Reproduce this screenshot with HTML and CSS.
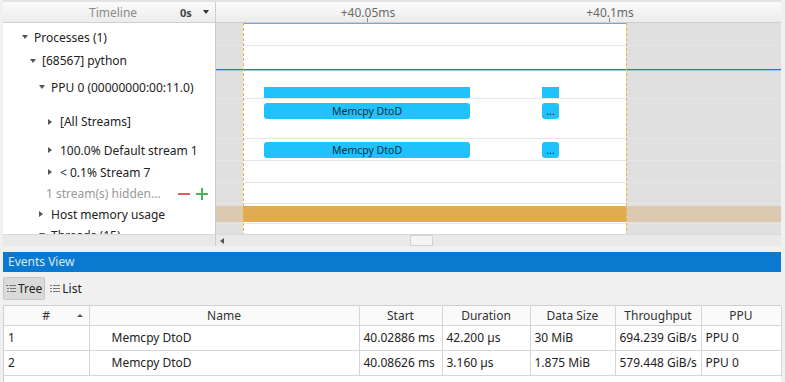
FILE: index.html
```html
<!DOCTYPE html>
<html lang="en">
<head>
    <meta charset="UTF-8">
    <title>Timeline</title>
    <link rel="stylesheet" href="styles.css">
</head>
<body>
<div class="app">
    <!-- Timeline -->
    <div class="timeline">
        <div class="tree-pane">
            <div class="pane-head">
                <span class="head-title">Timeline</span>
                <span class="head-zero">0s</span>
                <span class="caret"></span>
            </div>
            <div class="tree-rows">
                <div class="trow h23 low lvl0"><span class="tw"><i class="tri-down"></i></span>Processes (1)</div>
                <div class="trow h24 low lvl1"><span class="tw"><i class="tri-down"></i></span>[68567] python</div>
                <div class="trow h29 low lvl2"><span class="tw"><i class="tri-down"></i></span>PPU 0 (00000000:00:11.0)</div>
                <div class="trow h40 low lvl3"><span class="tw"><i class="tri-right"></i></span>[All Streams]</div>
                <div class="trow h22 lvl3"><span class="tw"><i class="tri-right"></i></span>100.0% Default stream 1</div>
                <div class="trow h22 lvl3"><span class="tw"><i class="tri-right"></i></span>&lt; 0.1% Stream 7</div>
                <div class="trow h21 hidden-row">
                    <span>1 stream(s) hidden...</span>
                    <span class="pm">
                        <svg width="14" height="14" viewBox="0 0 14 14"><path d="M1 7h12" stroke="#e25c5c" stroke-width="2"/></svg>
                        <svg width="14" height="14" viewBox="0 0 14 14"><path d="M1 7h12M7 1v12" stroke="#49b25a" stroke-width="2"/></svg>
                    </span>
                </div>
                <div class="trow h20 lvl2"><span class="tw"><i class="tri-right"></i></span>Host memory usage</div>
                <div class="trow h22 lvl2"><span class="tw"><i class="tri-down"></i></span>Threads (15)</div>
            </div>
            <div class="scroll-strip"></div>
        </div>

        <div class="track-pane">
            <div class="ruler">
                <span class="tick" style="left: 151px;"><span>+40.05ms</span></span>
                <span class="tick" style="left: 393px;"><span>+40.1ms</span></span>
            </div>
            <div class="tracks">
                <div class="range"></div>
                <div class="row h23"></div>
                <div class="row h24 row-sep"></div>
                <div class="row h29">
                    <div class="bar flat" style="left: 48px; width: 206px;"></div>
                    <div class="bar flat" style="left: 326px; width: 17px;"></div>
                </div>
                <div class="row h40">
                    <div class="bar" style="left: 48px; width: 206px;">Memcpy DtoD</div>
                    <div class="bar" style="left: 326px; width: 17px;">...</div>
                </div>
                <div class="row h22 lift">
                    <div class="bar" style="left: 48px; width: 206px;">Memcpy DtoD</div>
                    <div class="bar" style="left: 326px; width: 17px;">...</div>
                </div>
                <div class="row h22"></div>
                <div class="row h21"></div>
                <div class="row h20">
                    <div class="band"><div class="band-hot"></div></div>
                </div>
                <div class="row h22"></div>
                <div class="cursor" style="left: 27px;"></div>
                <div class="cursor" style="left: 410px;"></div>
            </div>
            <div class="hscroll">
                <span class="arrow-left"></span>
                <span class="thumb"></span>
            </div>
        </div>
    </div>

    <!-- Events View -->
    <div class="events-head">Events View</div>
    <div class="toolbar">
        <button class="tool-btn pressed">
            <svg width="10" height="9" viewBox="0 0 10 9"><path d="M0 1.5h2M3 1.5h7M1 4.5h2M4 4.5h6M1 7.5h2M4 7.5h6" stroke="#777" stroke-width="1"/></svg>
            Tree
        </button>
        <button class="tool-btn">
            <svg width="10" height="9" viewBox="0 0 10 9"><path d="M0 1.5h2M3 1.5h7M0 4.5h2M3 4.5h7M0 7.5h2M3 7.5h7" stroke="#777" stroke-width="1"/></svg>
            List
        </button>
    </div>
    <div class="table-wrap">
        <table class="events">
            <colgroup>
                <col style="width: 85px;">
                <col style="width: 270px;">
                <col style="width: 83px;">
                <col style="width: 88px;">
                <col style="width: 85px;">
                <col style="width: 86px;">
                <col style="width: 80px;">
            </colgroup>
            <thead>
                <tr>
                    <th class="sorted">#<span class="sort-up"></span></th>
                    <th>Name</th>
                    <th>Start</th>
                    <th>Duration</th>
                    <th>Data Size</th>
                    <th>Throughput</th>
                    <th>PPU</th>
                </tr>
            </thead>
            <tbody>
                <tr>
                    <td>1</td>
                    <td class="name">Memcpy DtoD</td>
                    <td>40.02886 ms</td>
                    <td>42.200 µs</td>
                    <td>30 MiB</td>
                    <td>694.239 GiB/s</td>
                    <td>PPU 0</td>
                </tr>
                <tr>
                    <td>2</td>
                    <td class="name">Memcpy DtoD</td>
                    <td>40.08626 ms</td>
                    <td>3.160 µs</td>
                    <td>1.875 MiB</td>
                    <td>579.448 GiB/s</td>
                    <td>PPU 0</td>
                </tr>
            </tbody>
        </table>
    </div>
</div>
</body>
</html>
```

FILE: styles.css
```css
* {
    box-sizing: border-box;
}

body {
    margin: 0;
    background: #f0f0f0;
    font-family: "Noto Sans", "Open Sans", sans-serif;
    font-size: 12px;
    color: #222;
}

.app {
    width: 785px;
    height: 382px;
    padding: 0 4px 0 3px;
    overflow: hidden;
}

/* Timeline */
.timeline {
    display: flex;
    border-top: 2px solid #e2e2e2;
    height: 246px;
}

.tree-pane {
    width: 213px;
    display: flex;
    flex-direction: column;
    background: #fff;
    border-right: 1px solid #cdcdcd;
}

.pane-head,
.ruler {
    height: 21px;
    border-bottom: 1px solid #cfcfcf;
    background: linear-gradient(#fbfbfb, #ececec);
}

.pane-head {
    display: flex;
    align-items: center;
    padding-left: 86px;
}

.head-title {
    color: #8a8a8a;
    width: 91px;
}

.head-zero {
    color: #444;
    font-weight: bold;
    font-size: 11px;
}

.caret {
    margin-left: 11px;
    border-left: 3.5px solid transparent;
    border-right: 3.5px solid transparent;
    border-top: 4px solid #333;
}

.tree-rows {
    height: 211px;
    overflow: hidden;
}

.trow {
    display: flex;
    align-items: center;
    white-space: nowrap;
}

.trow.low {
    padding-top: 5px;
}

.h20 { height: 20px; }
.h21 { height: 21px; }
.h22 { height: 22px; }
.h23 { height: 23px; }
.h24 { height: 24px; }
.h29 { height: 29px; }
.h40 { height: 40px; }

.lvl0 { padding-left: 19px; }
.lvl1 { padding-left: 27px; }
.lvl2 { padding-left: 36px; }
.lvl3 { padding-left: 45px; }

.tw {
    width: 12px;
    display: flex;
    align-items: center;
}

.tri-down {
    border-left: 3.5px solid transparent;
    border-right: 3.5px solid transparent;
    border-top: 4px solid #555;
}

.tri-right {
    border-top: 3.5px solid transparent;
    border-bottom: 3.5px solid transparent;
    border-left: 4px solid #555;
}

.hidden-row {
    padding-left: 43px;
    padding-right: 6px;
    color: #999;
}

.pm {
    margin-left: auto;
    display: flex;
    gap: 4px;
}

.scroll-strip {
    height: 12px;
    background: #e9e9e9;
    border-top: 1px solid #d8d8d8;
}

.track-pane {
    flex: 1;
    display: flex;
    flex-direction: column;
    min-width: 0;
}

.ruler {
    position: relative;
    color: #6a6a6a;
}

.tick {
    position: absolute;
    bottom: 0;
    height: 4px;
    border-left: 1px solid #888;
}

.tick span {
    position: absolute;
    bottom: 1px;
    left: 0;
    transform: translateX(-50%);
    white-space: nowrap;
}

.tracks {
    position: relative;
    height: 211px;
    overflow: hidden;
    background: #e0e0e0;
}

.range {
    position: absolute;
    top: 0;
    bottom: 0;
    left: 27px;
    width: 383px;
    background: #fff;
    border-top: 1px solid #7fa3d6;
}

.row {
    position: relative;
    border-bottom: 1px solid #e6e6e6;
}

.row-sep {
    border-bottom: 1px solid #2f70cc;
    box-shadow: 0 1px 0 #a7c2e8;
}

.bar {
    position: absolute;
    top: 4px;
    height: 16px;
    background: #1fc2fb;
    border-radius: 3px;
    color: #10303f;
    font-size: 10.5px;
    line-height: 16px;
    text-align: center;
    overflow: hidden;
}

.bar.flat {
    top: 17px;
    height: 11px;
    border-radius: 0;
}

.lift .bar {
    top: 3px;
}

.band {
    position: absolute;
    top: 2px;
    left: 0;
    right: 0;
    height: 16px;
    background: #dbcab0;
}

.band-hot {
    margin-left: 27px;
    width: 383px;
    height: 100%;
    background: #dfac52;
}

.cursor {
    position: absolute;
    top: 0;
    bottom: 0;
    width: 1px;
    background: repeating-linear-gradient(#f3b232 0 3px, transparent 3px 5px);
}

.hscroll {
    height: 12px;
    background: #e9e9e9;
    border-top: 1px solid #d8d8d8;
    display: flex;
    align-items: center;
    padding-left: 4px;
}

.arrow-left {
    border-top: 3px solid transparent;
    border-bottom: 3px solid transparent;
    border-right: 4px solid #555;
}

.thumb {
    margin-left: 186px;
    width: 23px;
    height: 11px;
    background: #f4f4f4;
    border: 1px solid #d2d2d2;
}

/* Events View */
.events-head {
    margin-top: 6px;
    height: 20px;
    background: #0a79d0;
    color: #d9e9f7;
    padding-left: 5px;
    line-height: 19px;
}

.toolbar {
    height: 33px;
    display: flex;
    align-items: center;
    gap: 2px;
}

.tool-btn {
    font: inherit;
    color: #222;
    display: flex;
    align-items: center;
    gap: 2px;
    height: 23px;
    padding: 0 2px;
    background: none;
    border: 1px solid transparent;
    border-radius: 2px;
}

.tool-btn.pressed {
    background: #dadada;
    border-color: #c6c6c6;
}

.table-wrap {
    height: 80px;
    background: #fff;
    border: 1px solid #cfcfcf;
    border-right: none;
}

.events {
    border-collapse: collapse;
    table-layout: fixed;
    width: 777px;
}

.events th {
    height: 19px;
    font-weight: normal;
    color: #333;
    background: #fafafa;
    border-right: 1px solid #d6d6d6;
    border-bottom: 1px solid #d6d6d6;
    padding: 0;
}

.events th.sorted {
    position: relative;
}

.sort-up {
    position: absolute;
    right: 6px;
    top: 8px;
    border-left: 3px solid transparent;
    border-right: 3px solid transparent;
    border-bottom: 3px solid #555;
}

.events td {
    height: 25px;
    padding: 0 4px;
    border-right: 1px solid #d6d6d6;
    border-bottom: 1px solid #d6d6d6;
    white-space: nowrap;
    overflow: hidden;
}

.events td.name {
    padding-left: 22px;
}
```
